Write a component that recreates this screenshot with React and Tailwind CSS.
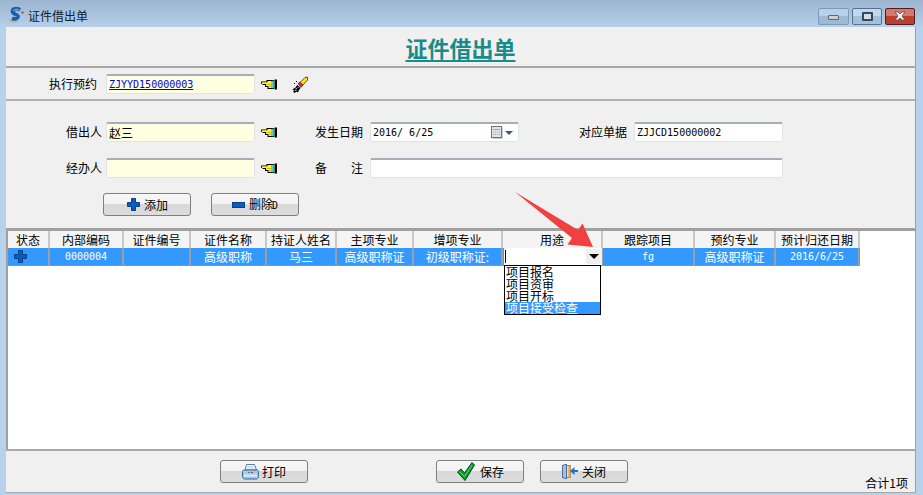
const font = { fontFamily: '"Noto Sans CJK SC", "Liberation Sans", sans-serif' };

const columns = [
  { title: "状态", width: "w-[42px]" },
  { title: "内部编码", width: "w-[74px]", value: "0000004", mono: true },
  { title: "证件编号", width: "w-[67px]" },
  { title: "证件名称", width: "w-[76px]", value: "高级职称" },
  { title: "持证人姓名", width: "w-[70px]", value: "马三" },
  { title: "主项专业", width: "w-[77px]", value: "高级职称证" },
  { title: "增项专业", width: "w-[89px]", value: "初级职称证:" },
  { title: "用途", width: "w-[100px]" },
  { title: "跟踪项目", width: "w-[92px]", value: "fg", mono: true },
  { title: "预约专业", width: "w-[81px]", value: "高级职称证" },
  { title: "预计归还日期", width: "w-[84px]", value: "2016/6/25", mono: true },
];

function Hand() {
  return (
    <svg width="16" height="11" viewBox="0 0 16 11" className="shrink-0">
      <path d="M0 2.500h5.500V1H13v9H6.500V8H4V6H1.500V5H0z" fill="#000" />
      <path d="M0.800 3.300h5.700V2h4.300v7H7.500V7H5V5H0.800z" fill="#fff22e" />
      <path d="M5.500 5.500h5M7 7.500h3.500" stroke="#a8961a" strokeWidth="0.600" />
      <rect x="10.800" y="1.800" width="2" height="7.400" fill="#45d8d8" />
      <rect x="13.500" y="0.500" width="2.500" height="10" fill="#000" />
    </svg>
  );
}

function Brush() {
  return (
    <svg width="17" height="17" viewBox="0 0 17 17" className="shrink-0">
      <path d="M8.500 7L14 1.500l2.500-.5V4L11 10z" fill="#ffe21a" stroke="#111" strokeWidth="0.700" />
      <path d="M7 7.500L9 6l3 3-2 2.500z" fill="#e8263a" stroke="#111" strokeWidth="0.500" />
      <path d="M6.500 9l3 3-1.500 2-1 2.500-2-1-1 1.500-2-1 1-1.500-1.500-1 2-1.500z" fill="#000" />
      <path d="M4 11.500l2 1.500M3.500 14l2 .5M6.500 11l1 1" stroke="#fff" strokeWidth="0.800" />
      <rect x="3" y="7" width="1" height="1" fill="#000" />
      <rect x="5" y="5" width="1" height="1" fill="#000" />
    </svg>
  );
}

function Logo() {
  return (
    <svg width="16" height="17" viewBox="0 0 16 17" className="shrink-0 -mt-[1px]">
      <path d="M12 3C9.500 1 4.500 1.200 4.500 4.500c0 3 6 2.500 5.500 5.500-.400 2-3.500 2.500-6 1.200" fill="none" stroke="#1c5ea8" strokeWidth="3.800" />
      <path d="M5 3.500C7 2 9.500 2 11 2.800" fill="none" stroke="#8fc4ee" strokeWidth="0.900" />
      <path d="M0.500 11.500C1 16 8 17 13 13 8.500 15.500 3 15 0.500 11.500z" fill="#e8a51f" />
      <rect x="13.500" y="4.500" width="2" height="2" fill="#d9302a" />
    </svg>
  );
}

function Plus({ className = "" }) {
  return (
    <svg width="13" height="13" viewBox="0 0 13 13" className={className}>
      <path d="M4.500 0.500h4v4h4v4h-4v4h-4v-4h-4v-4h4z" fill="#0b5dbb" stroke="#0a3f8c" strokeWidth="1" />
    </svg>
  );
}

function Minus() {
  return (
    <svg width="13" height="6" viewBox="0 0 13 6">
      <rect x="0.500" y="0.500" width="12" height="5" fill="#0b5dbb" stroke="#0a3f8c" strokeWidth="1" />
    </svg>
  );
}

function Printer() {
  return (
    <svg width="17" height="16" viewBox="0 0 17 16">
      <path d="M4.500 0.500h8l2 5.500H3z" fill="#f6f8fb" stroke="#5c7fa8" />
      <path d="M5 2.500h7M5 4h8" stroke="#b8c8da" strokeWidth="0.700" />
      <path d="M0.500 7.500c0-1 1-1.500 2-1.500h12c1 0 2 .5 2 1.500v5c0 1-1 2.500-2 2.500h-12c-1 0-2-1.500-2-2.500z" fill="#a9c8e8" stroke="#2f679f" />
      <rect x="2" y="10.500" width="13" height="2" fill="#dcebf8" />
      <rect x="6" y="8" width="2" height="1" fill="#2fa84f" />
      <rect x="9" y="8" width="2" height="1" fill="#d9302a" />
    </svg>
  );
}

function Check() {
  return (
    <svg width="18" height="19" viewBox="0 0 18 19">
      <path d="M0.500 10l3.500-3 3.500 4L15 0.500 17.500 3 8 18.500z" fill="#0fa31a" stroke="#063b4b" strokeWidth="1" />
      <path d="M3 10l4.500 4.500L15 3" fill="none" stroke="#56d85a" strokeWidth="1" />
    </svg>
  );
}

function Door() {
  return (
    <svg width="16" height="15" viewBox="0 0 16 15">
      <rect x="0.500" y="1.500" width="8" height="12" fill="#f3d9a0" stroke="#8a8fa8" />
      <path d="M0.500 1.500l4-1.500v15l-4-1.500z" fill="#9cc0e8" stroke="#4f6e9c" />
      <rect x="6.500" y="2" width="2" height="11" fill="#f0a030" />
      <path d="M16 6h-3.500V3L8 7l4.500 4V8H16z" fill="#1f6fd0" />
    </svg>
  );
}

function Calendar() {
  return (
    <svg width="12" height="13" viewBox="0 0 12 13">
      <rect x="1.500" y="1.500" width="10" height="11" fill="#999" />
      <rect x="0.500" y="0.500" width="10" height="11" fill="#dfe3ea" stroke="#7a6f6f" />
      <path d="M2 3h7v1H2zM2 5.500h1v1H2zM4 5.500h1v1H4zM6 5.500h1v1H6zM8 5.500h1v1H8zM2 8h1v1H2zM4 8h1v1H4zM6 8h1v1H6zM8 8h1v1H8z" fill="#9aa6ba" />
    </svg>
  );
}

function Field({ children, className = "" }) {
  return (
    <div className={`h-[20px] border border-t-2 border-[#dfe3ec] border-t-[#a9adb8] rounded-[2px] flex items-center pl-[2px] text-[12px] text-black ${className}`}>
      {children}
    </div>
  );
}

function Btn({ icon, label, width = "w-[88px]", gap = "gap-[4px]", pl = "pl-[24px]", className = "" }) {
  return (
    <button className={`${width} h-[23px] ${pl} ${gap} flex items-center border border-[#7f7f7f] rounded-[3px] bg-[linear-gradient(#f7f7f7_0%,#f3f3f3_45%,#d9d9d9_50%,#dcdcdc_100%)] text-[12px] text-black leading-none ${className}`}>
      {icon}
      <span>{label}</span>
    </button>
  );
}

function WinBtn({ className = "", children }) {
  return (
    <div className={`h-[17px] flex items-center justify-center rounded-[2px] border ${className}`}>
      {children}
    </div>
  );
}

export default function App() {
  return (
    <div style={font} className="w-[923px] h-[495px] overflow-hidden relative flex flex-col bg-[#b9d2ec] text-[12px] text-black">
      {/* title bar */}
      <div className="h-[27px] shrink-0 flex items-center pt-[5px] pl-[8px] pr-[8px] bg-[linear-gradient(#9bb5d1,#b6d0ec)]">
        <Logo />
        <span className="ml-[4px] text-[12px] text-[#10202c]">证件借出单</span>
        <div className="ml-auto flex gap-[3px]">
          <WinBtn className="w-[31px] border-[#7f99b8] bg-[linear-gradient(#b9d0e8_50%,#9db9d6_50%)]">
            <div className="w-[11px] h-[5px] mt-[3px] bg-[#cfcfcf] border border-[#5c6a78] rounded-[1px]" />
          </WinBtn>
          <WinBtn className="w-[30px] border-[#56708e] bg-[linear-gradient(#c3d7ec_50%,#a3bfdb_50%)]">
            <div className="w-[11px] h-[9px] border-2 border-[#39465a] bg-[#cfdcea] rounded-[1px]" />
          </WinBtn>
          <WinBtn className="w-[30px] border-[#4f1c28] bg-[linear-gradient(#d5796c_50%,#bd3f2c_50%)]">
            <svg width="12" height="10" viewBox="0 0 12 10">
              <path d="M1 1h3l2 2 2-2h3L8 5l3 4H8L6 7 4 9H1l3-4z" fill="#f2f2f2" stroke="#444" strokeWidth="0.700" />
            </svg>
          </WinBtn>
        </div>
      </div>

      {/* window body */}
      <div className="flex-1 ml-[6px] mr-[7px] mb-[2px] flex flex-col bg-[#f0f0f0] border-r border-[#a0a0a0] min-h-0">
        <div className="h-[41px] shrink-0 border-b-2 border-[#a8a8a8] flex items-center justify-center">
          <span className="text-[22px] font-semibold leading-none text-[#1a8a8a] underline underline-offset-[3px]">证件借出单</span>
        </div>

        <div className="h-[33px] shrink-0 pt-[1px] border-b-2 border-[#b0b0b0] flex items-center">
          <span className="ml-[43px] w-[57px]">执行预约</span>
          <Field className="w-[149px] bg-[#ffffe1]">
            <span className="font-['DejaVu_Sans_Mono'] text-[10px] text-[#0000e8] underline">ZJYYD150000003</span>
          </Field>
          <div className="ml-[6px]"><Hand /></div>
          <div className="ml-[14px]"><Brush /></div>
        </div>

        <div className="h-[130px] shrink-0 border-b-[3px] border-[#a0a0a0] flex flex-col pt-[21px]">
          <div className="flex items-center h-[20px]">
            <span className="ml-[60px] w-[40px]">借出人</span>
            <Field className="w-[149px] bg-[#ffffe1]">赵三</Field>
            <div className="ml-[6px]"><Hand /></div>
            <span className="ml-[38px] w-[55px]">发生日期</span>
            <Field className="w-[149px] bg-white justify-between pr-[5px]">
              <span className="font-['DejaVu_Sans_Mono'] text-[10px]">2016/ 6/25</span>
              <span className="flex items-center gap-[2px]">
                <Calendar />
                <span className="w-0 h-0 border-x-[4px] border-x-transparent border-t-[4px] border-t-[#45547e]" />
              </span>
            </Field>
            <span className="ml-[60px] w-[55px]">对应单据</span>
            <Field className="w-[149px] bg-white">
              <span className="font-['DejaVu_Sans_Mono'] text-[10px]">ZJJCD150000002</span>
            </Field>
          </div>
          <div className="flex items-center h-[20px] mt-[16px]">
            <span className="ml-[60px] w-[40px]">经办人</span>
            <Field className="w-[149px] bg-[#ffffe1]" />
            <div className="ml-[6px]"><Hand /></div>
            <span className="ml-[38px] w-[55px] flex justify-between pr-[7px]"><span>备</span><span>注</span></span>
            <Field className="w-[413px] bg-white" />
          </div>
          <div className="flex mt-[15px] ml-[97px] gap-[20px]">
            <Btn icon={<Plus />} label="添加" pl="pl-[23px]" />
            <Btn icon={<Minus />} label={<>删除<span className="font-['DejaVu_Sans_Mono'] text-[10px] -ml-[1px]">D</span></>} pl="pl-[20px]" />
          </div>
        </div>

        {/* table */}
        <div className="flex-1 min-h-0 bg-white flex flex-col relative border-l-2 border-[#a0a0a0]">
          <div className="flex h-[17px] shrink-0 w-fit bg-[#f4f4f4]">
            {columns.map((col) => (
              <div key={col.title} className={`${col.width} shrink-0 flex items-center justify-center border-r-2 border-[#c8c8c8] whitespace-nowrap leading-none`}>
                {col.title}
              </div>
            ))}
          </div>
          <div className="flex h-[18px] shrink-0 w-fit bg-[#3399ff] border-b border-[#a0a0a0] outline-1 outline-dotted -outline-offset-1 outline-[#c07a30] text-white">
            {columns.map((col, i) => (
              <div key={col.title} className={`${col.width} shrink-0 flex items-center justify-center border-r-2 border-[#9aa0a8] whitespace-nowrap leading-none ${col.mono ? "font-['DejaVu_Sans_Mono'] text-[10px]" : ""}`}>
                {i === 0 ? <Plus className="mr-[15px]" /> : col.value}
              </div>
            ))}
          </div>

          {/* combo editor and open list */}
          <div className="absolute left-[495px] top-[17px] w-[99px] h-[17px] bg-white border-l border-[#888] flex items-center justify-between pl-[1px]">
            <span className="w-px h-[13px] bg-black" />
            <span className="w-[16px] h-[15px] bg-[#f0f0f0] flex items-center justify-center">
              <span className="w-0 h-0 border-x-[5px] border-x-transparent border-t-[5px] border-t-black" />
            </span>
          </div>
          <ul className="absolute left-[496px] top-[34px] w-[97px] h-[50px] bg-white border border-black text-[12px] leading-[12px]">
            <li className="pl-[1px]">项目报名</li>
            <li className="pl-[1px]">项目资审</li>
            <li className="pl-[1px]">项目开标</li>
            <li className="pl-[1px] bg-[#3399ff] text-white">项目接受检查</li>
          </ul>
        </div>

        {/* footer */}
        <div className="h-[44px] shrink-0 border-t-2 border-[#a8a8a8] border-b border-b-[#a8a8a8] flex items-start pt-[9px]">
          <Btn icon={<Printer />} label="打印" pl="pl-[21px]" gap="gap-[3px]" className="ml-[214px]" />
          <Btn icon={<Check />} label="保存" pl="pl-[20px]" gap="gap-[5px]" className="ml-[128px]" />
          <Btn icon={<Door />} label="关闭" pl="pl-[21px]" gap="gap-[4px]" className="ml-[16px]" />
          <span className="ml-auto mr-[7px] mt-[14px]">合计1项</span>
        </div>
      </div>

      {/* red annotation arrow */}
      <svg width="90" height="62" viewBox="0 0 90 62" className="absolute left-[510px] top-[190px]">
        <path d="M5 2L68 40 72.500 33.500 83 57 57.500 54.500 62 48z" fill="#f04040" />
      </svg>
    </div>
  );
}
